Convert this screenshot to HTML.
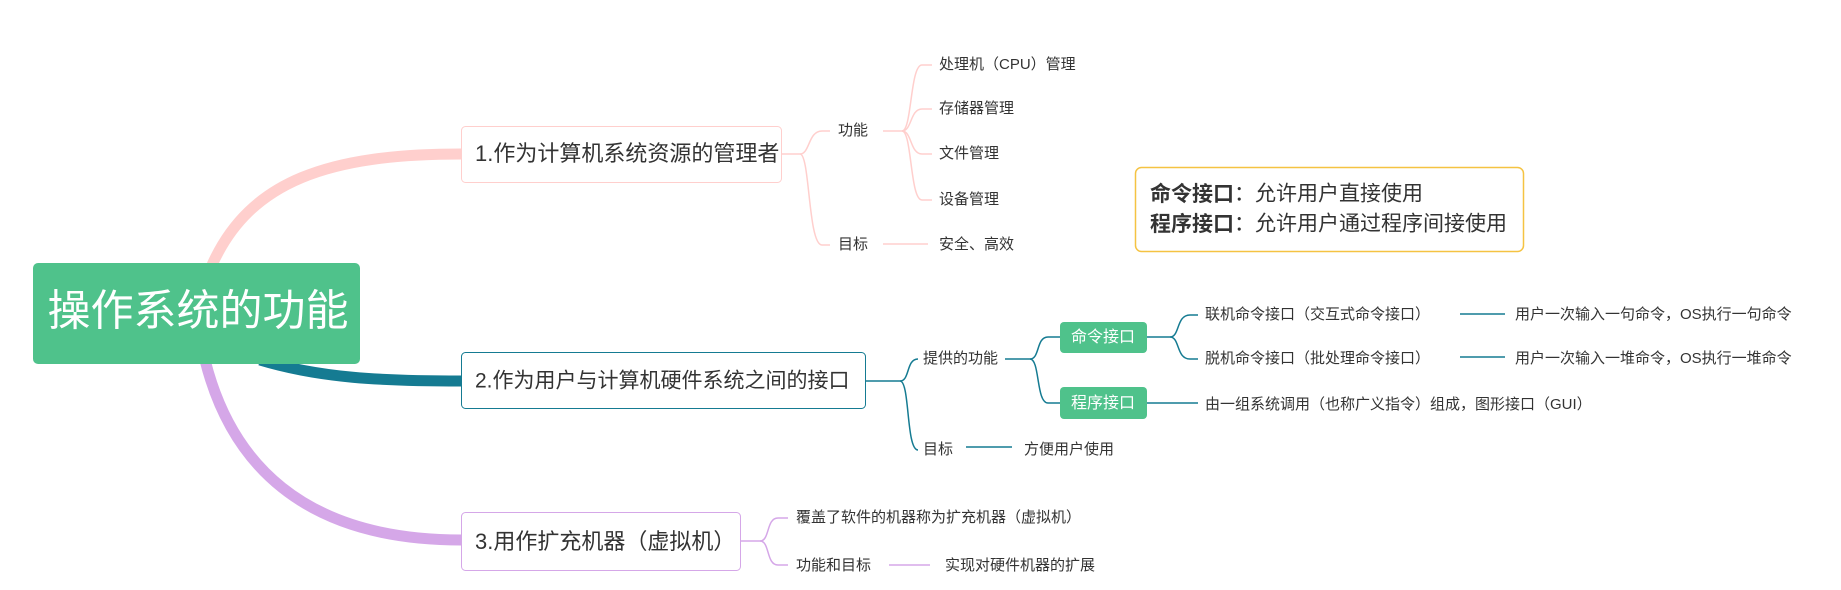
<!DOCTYPE html>
<html><head><meta charset="utf-8"><style>
html,body{margin:0;padding:0;background:#fff;}
svg{display:block;}
text{font-family:"Liberation Sans","Noto Sans CJK SC",sans-serif;fill:#333;dominant-baseline:middle;}
</style></head><body>
<svg width="1841" height="590" viewBox="0 0 1841 590" xmlns="http://www.w3.org/2000/svg">
<path d="M212 265 C250 180 330 154 461 154" stroke="#ffcfcd" stroke-width="11" fill="none"/>
<path d="M260 360 C320 378 380 381 461 381" stroke="#157b92" stroke-width="11" fill="none"/>
<path d="M205 360 C230 460 300 540 461 540" stroke="#d5a7e8" stroke-width="11" fill="none"/>
<rect x="33" y="263" width="327" height="101" rx="5" fill="#4fc28b"/>
<text x="198" y="314" font-size="43" text-anchor="middle" style="fill:#fff">操作系统的功能</text>
<rect x="461.5" y="126.5" width="320" height="56" rx="4" fill="#fff" stroke="#ffcfcd"/>
<text x="475" y="155" font-size="22">1.作为计算机系统资源的管理者</text>
<g stroke="#ffcfcd" stroke-width="1.5" fill="none">
<path d="M782 154 H800 C810 154 808 131 822 131 H830"/>
<path d="M800 154 C810 154 808 245 822 245 H830"/>
<path d="M883 131 H902 C912 131 910 65 922 65 H932"/>
<path d="M902 131 C912 131 910 109 922 109 H932"/>
<path d="M902 131 C912 131 910 154 922 154 H932"/>
<path d="M902 131 C912 131 910 200 922 200 H932"/>
<path d="M883 244 H928"/>
</g>
<text x="838" y="131" font-size="15">功能</text>
<text x="838" y="245" font-size="15">目标</text>
<text x="939" y="65" font-size="15">处理机（CPU）管理</text>
<text x="939" y="109" font-size="15">存储器管理</text>
<text x="939" y="154" font-size="15">文件管理</text>
<text x="939" y="200" font-size="15">设备管理</text>
<text x="939" y="245" font-size="15">安全、高效</text>
<rect x="1135.5" y="167.5" width="388" height="84" rx="6" fill="#fff" stroke="#f5c342" stroke-width="1.5"/>
<text x="1150" y="195" font-size="21"><tspan font-weight="bold">命令接口</tspan>：允许用户直接使用</text>
<text x="1150" y="225" font-size="21"><tspan font-weight="bold">程序接口</tspan>：允许用户通过程序间接使用</text>
<rect x="461.5" y="352.5" width="404" height="56" rx="4" fill="#fff" stroke="#157b92"/>
<text x="475" y="382" font-size="21">2.作为用户与计算机硬件系统之间的接口</text>
<g stroke="#157b92" stroke-width="1.5" fill="none">
<path d="M866 381 H900 C910 381 906 359 918 359"/>
<path d="M900 381 C910 381 906 450 918 450"/>
<path d="M966 447 H1012"/>
<path d="M1005 359 H1030 C1040 359 1036 337 1048 337 H1060"/>
<path d="M1030 359 C1040 359 1036 403 1048 403 H1060"/>
<path d="M1147 337 H1170 C1180 337 1176 315 1190 315 H1198"/>
<path d="M1170 337 C1180 337 1176 359 1190 359 H1198"/>
<path d="M1147 403 H1198"/>
<path d="M1460 314 H1505"/>
<path d="M1460 357 H1505"/>
</g>
<text x="923" y="359" font-size="15">提供的功能</text>
<text x="923" y="450" font-size="15">目标</text>
<text x="1024" y="450" font-size="15">方便用户使用</text>
<rect x="1060" y="322" width="87" height="31" rx="4" fill="#4fc28b"/>
<text x="1103" y="338" font-size="16" text-anchor="middle" style="fill:#fff">命令接口</text>
<rect x="1060" y="387" width="87" height="32" rx="4" fill="#4fc28b"/>
<text x="1103" y="404" font-size="16" text-anchor="middle" style="fill:#fff">程序接口</text>
<text x="1205" y="315" font-size="15">联机命令接口（交互式命令接口）</text>
<text x="1205" y="359" font-size="15">脱机命令接口（批处理命令接口）</text>
<text x="1205" y="405" font-size="15">由一组系统调用（也称广义指令）组成，图形接口（GUI）</text>
<text x="1515" y="315" font-size="15">用户一次输入一句命令，OS执行一句命令</text>
<text x="1515" y="359" font-size="15">用户一次输入一堆命令，OS执行一堆命令</text>
<rect x="461.5" y="512.5" width="279" height="58" rx="4" fill="#fff" stroke="#d5a7e8"/>
<text x="475" y="543" font-size="22">3.用作扩充机器（虚拟机）</text>
<g stroke="#d5a7e8" stroke-width="1.5" fill="none">
<path d="M741 541 H760 C770 541 766 518 778 518 H788"/>
<path d="M760 541 C770 541 766 565 778 565 H788"/>
<path d="M889 565 H930"/>
</g>
<text x="796" y="518" font-size="15">覆盖了软件的机器称为扩充机器（虚拟机）</text>
<text x="796" y="566" font-size="15">功能和目标</text>
<text x="945" y="566" font-size="15">实现对硬件机器的扩展</text>
</svg>
</body></html>
